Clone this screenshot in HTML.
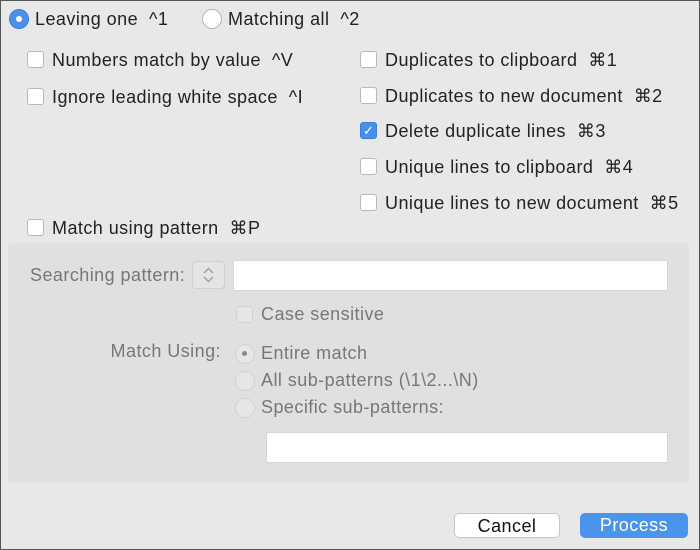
<!DOCTYPE html>
<html><head><style>
body{margin:0;width:700px;height:550px;background:#e8e8e8;font-family:"Liberation Sans","DejaVu Sans",sans-serif;font-size:18px;letter-spacing:0.45px;color:#222;position:relative;overflow:hidden}
.frame{position:absolute;left:0;top:0;width:698px;height:548px;border:1px solid #555}
.t{position:absolute;line-height:20px;white-space:pre}
.cb{position:absolute;width:15px;height:15px;background:#fff;border:1px solid #b8b8b8;border-radius:3px;box-sizing:content-box}
.cb.on{background:#4a90e8;border-color:#3d7fd6;color:#fff;font-size:13px;line-height:15px;text-align:center;letter-spacing:0}
.rd{position:absolute;width:18px;height:18px;border-radius:50%;background:#fff;border:1px solid #b5b5b5}
.rd.on{background:#4a90e8;border-color:#3d7fd6}
.rd.on::after{content:"";position:absolute;left:6px;top:6px;width:6px;height:6px;border-radius:50%;background:#fff}
.g{color:#777}
.box{position:absolute;left:8px;top:243px;width:681px;height:240px;background:#e0e0e0;border-radius:4px}
.dcb{position:absolute;width:15px;height:15px;background:#e6e6e6;border:1px solid #d2d2d2;border-radius:3px}
.drd{position:absolute;width:18px;height:18px;border-radius:50%;background:#e6e6e6;border:1px solid #d2d2d2}
.field{position:absolute;background:#fff;border:1px solid #d6d6d6}
.btn{position:absolute;height:25px;border-radius:5px;text-align:center;line-height:25px;font-size:18px}
</style></head><body>
<div class="frame"></div>
<div class="rd on" style="left:9px;top:9px"></div><div class="t" style="left:35px;top:9px">Leaving one  ^1</div>
<div class="rd" style="left:202px;top:9px"></div><div class="t" style="left:228px;top:9px">Matching all  ^2</div>

<div class="cb" style="left:27px;top:51px"></div><div class="t" style="left:52px;top:50px">Numbers match by value  ^V</div>
<div class="cb" style="left:27px;top:88px"></div><div class="t" style="left:52px;top:87px">Ignore leading white space  ^I</div>

<div class="cb" style="left:360px;top:51px"></div><div class="t" style="left:385px;top:50px">Duplicates to clipboard  ⌘1</div>
<div class="cb" style="left:360px;top:87px"></div><div class="t" style="left:385px;top:86px">Duplicates to new document  ⌘2</div>
<div class="cb on" style="left:360px;top:122px">✓</div><div class="t" style="left:385px;top:121px">Delete duplicate lines  ⌘3</div>
<div class="cb" style="left:360px;top:158px"></div><div class="t" style="left:385px;top:157px">Unique lines to clipboard  ⌘4</div>
<div class="cb" style="left:360px;top:194px"></div><div class="t" style="left:385px;top:193px">Unique lines to new document  ⌘5</div>

<div class="cb" style="left:27px;top:219px"></div><div class="t" style="left:52px;top:218px">Match using pattern  ⌘P</div>

<div class="box"></div>
<div class="t g" style="left:30px;top:265px">Searching pattern:</div>
<div style="position:absolute;left:192px;top:261px;width:33px;height:28px;background:#e4e4e4;border:1px solid #d0d0d0;border-radius:4px;box-sizing:border-box">
<svg width="31" height="26" viewBox="0 0 31 26"><path d="M11 11 L15.5 6.5 L20 11 M11 15 L15.5 19.5 L20 15" fill="none" stroke="#999" stroke-width="1.3"/></svg></div>
<div class="field" style="left:233px;top:260px;width:433px;height:29px"></div>
<div class="dcb" style="left:236px;top:306px"></div><div class="t g" style="left:261px;top:304px">Case sensitive</div>
<div class="t g" style="right:479px;top:341px">Match Using:</div>
<div class="drd" style="left:235px;top:344px"></div><div style="position:absolute;left:242px;top:351px;width:5px;height:5px;border-radius:50%;background:#888"></div>
<div class="t g" style="left:261px;top:343px">Entire match</div>
<div class="drd" style="left:235px;top:371px"></div><div class="t g" style="left:261px;top:370px">All sub-patterns (\1\2...\N)</div>
<div class="drd" style="left:235px;top:398px"></div><div class="t g" style="left:261px;top:397px">Specific sub-patterns:</div>
<div class="field" style="left:266px;top:432px;width:400px;height:29px"></div>

<div class="btn" style="left:454px;top:513px;width:106px;background:#fff;border:1px solid #c6c6c6;box-sizing:border-box;color:#111">Cancel</div>
<div class="btn" style="left:580px;top:513px;width:108px;background:#4a94ec;color:#fff">Process</div>
</body></html>
